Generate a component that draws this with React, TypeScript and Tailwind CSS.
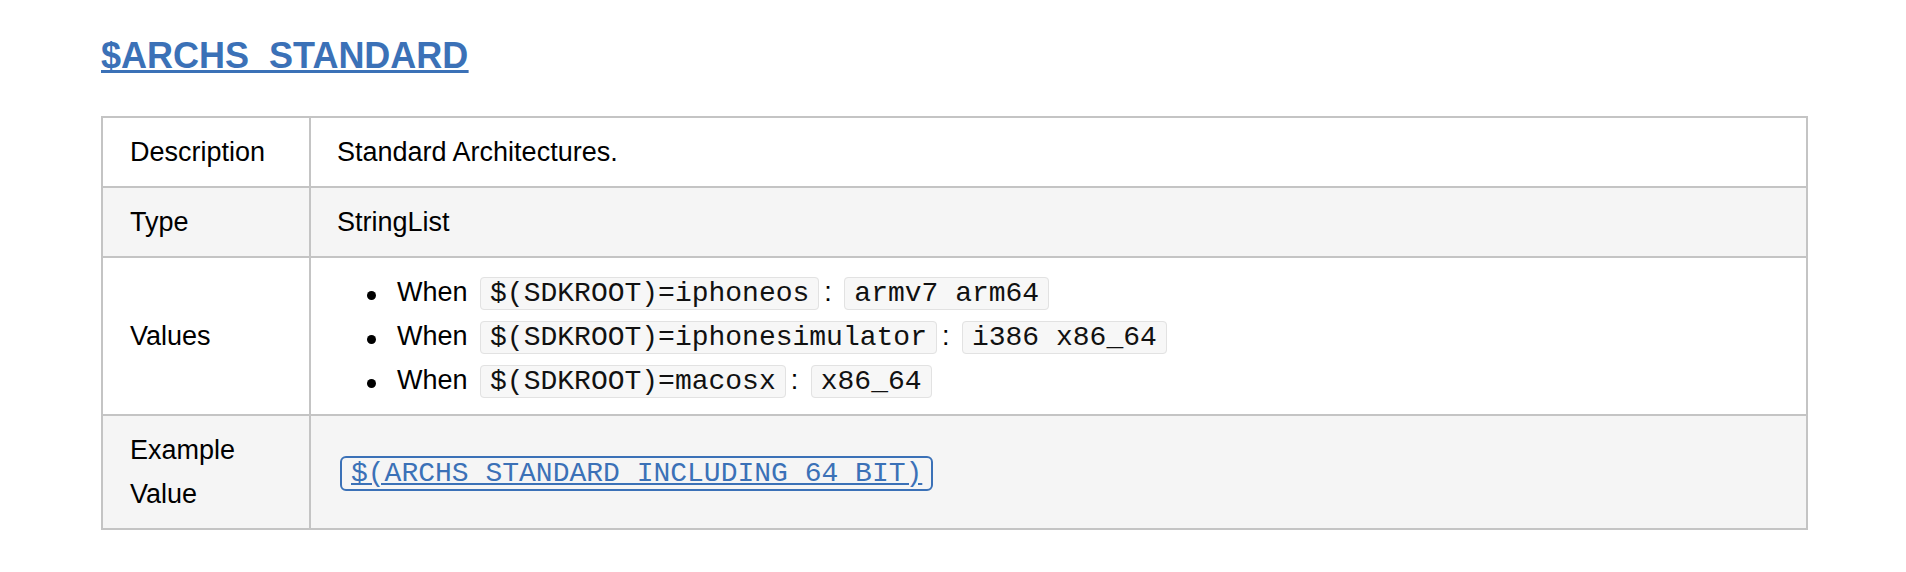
import type { ReactNode } from 'react'

const rowBase = 'grid grid-cols-[208px_1fr]'
const labelCell = 'flex items-center border-r-2 border-[#c4c4c4] pl-[27px] pr-4 py-[12px]'
const valueCell = 'flex items-center pl-[26px] pr-4 py-[12px]'

function Code({ children }: { children: ReactNode }) {
  return (
    <code className="mx-[5px] rounded-[4px] border border-[#e2e2e2] bg-[#f7f7f7] px-[9px] py-0 font-['Liberation_Mono','Courier_New',monospace] text-[28px] leading-none text-[#111]">
      {children}
    </code>
  )
}

function Bullet({ cond, value }: { cond: string; value: string }) {
  return (
    <li className="flex h-[44px] items-start">
      <span className="ml-[30px] mt-[21px] h-[9px] w-[9px] shrink-0 rounded-full bg-black" />
      <span className="ml-[21px] whitespace-nowrap">
        When<span> </span>
        <Code>{cond}</Code>: <Code>{value}</Code>
      </span>
    </li>
  )
}

export default function App() {
  return (
    <div className="min-h-screen bg-white pl-[101px] pt-[34px] font-['Liberation_Sans',Arial,sans-serif] text-[27px] leading-[44px] text-black">
      {/* ── HEADING ─────────────────────────────────────────── */}
      <h3 className="h-[44px] text-[36px] font-bold leading-[44px] text-[#3b71b7] underline [text-decoration-skip-ink:none]">
        <a href="#ARCHS_STANDARD">$ARCHS_STANDARD</a>
      </h3>

      {/* ── SETTING TABLE ───────────────────────────────────── */}
      <div className="mt-[38px] w-[1707px] border-2 border-[#c4c4c4]">
        <div className={`${rowBase} bg-white`}>
          <div className={labelCell}>Description</div>
          <div className={valueCell}>Standard Architectures.</div>
        </div>

        <div className={`${rowBase} border-t-2 border-[#c4c4c4] bg-[#f5f5f5]`}>
          <div className={labelCell}>Type</div>
          <div className={valueCell}>StringList</div>
        </div>

        <div className={`${rowBase} border-t-2 border-[#c4c4c4] bg-white`}>
          <div className={labelCell}>Values</div>
          <div className="flex items-center pl-[26px] py-[12px]">
            <ul className="w-full">
              <Bullet cond="$(SDKROOT)=iphoneos" value="armv7 arm64" />
              <Bullet cond="$(SDKROOT)=iphonesimulator" value="i386 x86_64" />
              <Bullet cond="$(SDKROOT)=macosx" value="x86_64" />
            </ul>
          </div>
        </div>

        <div className={`${rowBase} border-t-2 border-[#c4c4c4] bg-[#f5f5f5]`}>
          <div className={labelCell}>
            Example
            <br />
            Value
          </div>
          <div className={valueCell}>
            <a href="#ARCHS_STANDARD_INCLUDING_64_BIT" className="text-[#3b71b7] underline">
              <code className="mx-[3px] rounded-[6px] border-2 border-[#3b71b7] bg-[#f5f5f5] px-[9px] py-0 font-['Liberation_Mono','Courier_New',monospace] text-[28px] leading-none">
                $(ARCHS_STANDARD_INCLUDING_64_BIT)
              </code>
            </a>
          </div>
        </div>
      </div>
    </div>
  )
}
